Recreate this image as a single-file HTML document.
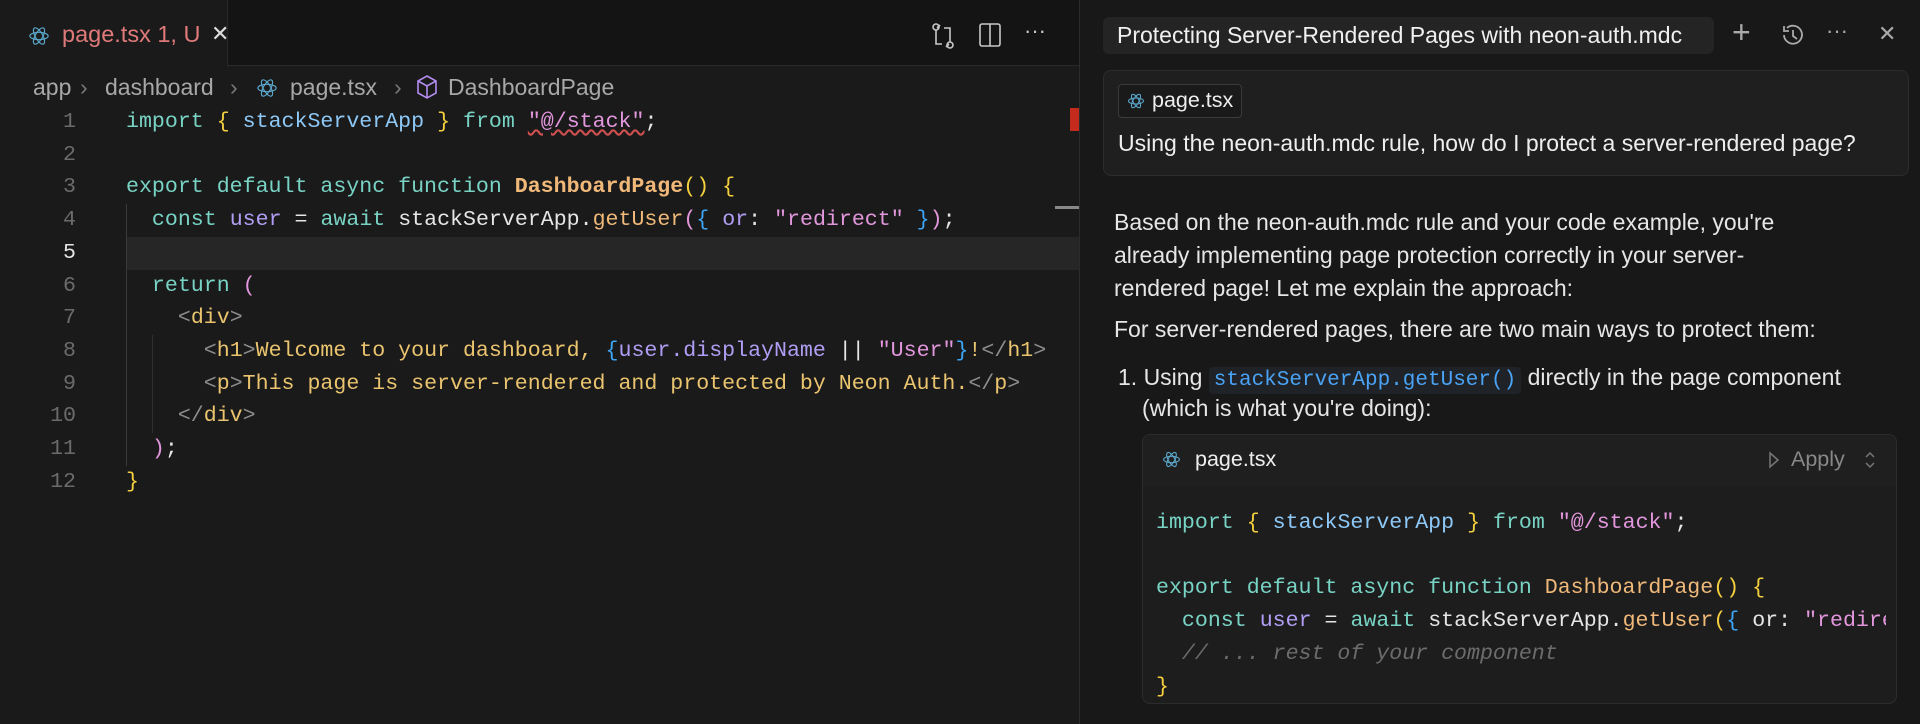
<!DOCTYPE html>
<html><head><meta charset="utf-8"><style>
*{margin:0;padding:0;box-sizing:border-box}
body{width:1920px;height:724px;background:#181818;overflow:hidden;position:relative;font-family:"Liberation Sans",sans-serif;color:#ddd}
.abs{position:absolute}
.mono{font-family:"Liberation Mono",monospace;font-size:21.6px;white-space:pre}
.k{color:#78d3c4}.v{color:#8ec8f6}.b{color:#f4d03f}.s{color:#e296dc}.f{color:#f0b97a}.u{color:#b19ef4}.bl{color:#3ea6f7}.g{color:#8d8d8d}.y{color:#eac46e}.w{color:#e6e6e6}.c{color:#6c6c6c;font-style:italic}
.ln{position:absolute;left:40px;width:36px;text-align:right;color:#6b6b6b}
.code{position:absolute;left:126px}
.guide{position:absolute;width:1px;background:#3a3a3a}
.bc{position:absolute;top:74px;font-size:23px;color:#a8a8a8;white-space:nowrap}
</style></head><body>
<div class="abs" style="left:0;top:0;width:1079px;height:724px;background:#1a1a1a"></div>
<div class="abs" style="left:0;top:0;width:1079px;height:66px;background:#141414;border-bottom:1px solid #2a2a2a"></div>
<div class="abs" style="left:0;top:0;width:228px;height:67px;background:#1a1a1a;border-right:1px solid #2a2a2a"></div>
<svg class="abs" style="left:28px;top:24px" width="22" height="24" viewBox="0 0 24 24" fill="none" stroke="#5aa5c8" stroke-width="1.3"><ellipse cx="12" cy="12" rx="10" ry="4"/><ellipse cx="12" cy="12" rx="10" ry="4" transform="rotate(60 12 12)"/><ellipse cx="12" cy="12" rx="10" ry="4" transform="rotate(120 12 12)"/></svg>
<div class="abs" style="left:62px;top:21px;font-size:23.5px;color:#e07a7a">page.tsx 1, U</div>
<div class="abs" style="left:211px;top:21px;font-size:22px;color:#ddd">✕</div>
<svg class="abs" style="left:930px;top:22px" width="26" height="28" viewBox="0 0 26 28" fill="none" stroke="#c8c8c8" stroke-width="1.6"><circle cx="6" cy="5" r="3"/><circle cx="20" cy="23" r="3"/><path d="M6 8v14h6M20 20V6h-6M10 3l-3 3M16 25l3-3"/></svg>
<svg class="abs" style="left:978px;top:22px" width="24" height="26" fill="none" stroke="#c8c8c8" stroke-width="1.6"><rect x="2" y="2" width="20" height="22" rx="2"/><path d="M12 2v22"/></svg>
<div class="abs" style="left:1024px;top:18px;font-size:22px;color:#c8c8c8">···</div>
<div class="bc" style="left:33px">app</div>
<div class="bc" style="left:80px;color:#777">›</div>
<div class="bc" style="left:105px">dashboard</div>
<div class="bc" style="left:230px;color:#777">›</div>
<svg class="abs" style="left:256px;top:76px" width="22" height="24" viewBox="0 0 24 24" fill="none" stroke="#5aa5c8" stroke-width="1.3"><ellipse cx="12" cy="12" rx="10" ry="4"/><ellipse cx="12" cy="12" rx="10" ry="4" transform="rotate(60 12 12)"/><ellipse cx="12" cy="12" rx="10" ry="4" transform="rotate(120 12 12)"/></svg>
<div class="bc" style="left:290px">page.tsx</div>
<div class="bc" style="left:394px;color:#777">›</div>
<svg class="abs" style="left:416px;top:74px" width="22" height="26" viewBox="0 0 22 26" fill="none" stroke="#b38cf0" stroke-width="1.6"><path d="M11 2l9 5v12l-9 5-9-5V7z M2 7l9 5 9-5 M11 12v12"/></svg>
<div class="bc" style="left:448px">DashboardPage</div>
<div class="abs" style="left:126px;top:237px;width:953px;height:33px;background:#262626"></div>
<div class="guide" style="left:126px;top:204px;height:262px"></div>
<div class="guide" style="left:152px;top:335px;height:98px;background:#2e2e2e"></div>
<div class="abs" style="left:1070px;top:108px;width:9px;height:23px;background:#c42b1c"></div>
<div class="abs" style="left:1055px;top:206px;width:24px;height:3px;background:#888"></div>
<div class="mono" style="position:absolute;left:0;top:106px;line-height:32.7px;width:1079px"><div class="ln" style="top:0">1</div><div class="ln" style="top:32.7px">2</div><div class="ln" style="top:65.4px">3</div><div class="ln" style="top:98.1px">4</div><div class="ln" style="top:130.8px;color:#e6e6e6">5</div><div class="ln" style="top:163.5px">6</div><div class="ln" style="top:196.2px">7</div><div class="ln" style="top:228.9px">8</div><div class="ln" style="top:261.6px">9</div><div class="ln" style="top:294.3px">10</div><div class="ln" style="top:327px">11</div><div class="ln" style="top:359.7px">12</div><div class="code" style="top:0"><span class="k">import</span> <span class="b">{</span> <span class="v">stackServerApp</span> <span class="b">}</span> <span class="k">from</span> <span class="s" style="text-decoration:underline wavy #d05050">"@/stack"</span><span class="w">;</span></div><div class="code" style="top:65.4px"><span class="k">export default async function</span> <span class="f" style="font-weight:bold">DashboardPage</span><span class="b">()</span> <span class="b">{</span></div><div class="code" style="top:98.1px">  <span class="k">const</span> <span class="u">user</span> <span class="w">=</span> <span class="k">await</span> <span class="w">stackServerApp.</span><span class="f">getUser</span><span class="s">(</span><span class="bl">{</span> <span class="u">or</span><span class="w">:</span> <span class="s">"redirect"</span> <span class="bl">}</span><span class="s">)</span><span class="w">;</span></div><div class="code" style="top:163.5px">  <span class="k">return</span> <span class="s">(</span></div><div class="code" style="top:196.2px">    <span class="g">&lt;</span><span class="y">div</span><span class="g">&gt;</span></div><div class="code" style="top:228.9px">      <span class="g">&lt;</span><span class="y">h1</span><span class="g">&gt;</span><span class="y">Welcome to your dashboard, </span><span class="bl">{</span><span class="u">user.displayName</span> <span class="w">||</span> <span class="s">"User"</span><span class="bl">}</span><span class="y">!</span><span class="g">&lt;/</span><span class="y">h1</span><span class="g">&gt;</span></div><div class="code" style="top:261.6px">      <span class="g">&lt;</span><span class="y">p</span><span class="g">&gt;</span><span class="y">This page is server-rendered and protected by Neon Auth.</span><span class="g">&lt;/</span><span class="y">p</span><span class="g">&gt;</span></div><div class="code" style="top:294.3px">    <span class="g">&lt;/</span><span class="y">div</span><span class="g">&gt;</span></div><div class="code" style="top:327px">  <span class="s">)</span><span class="w">;</span></div><div class="code" style="top:359.7px"><span class="b">}</span></div></div>
<div class="abs" style="left:1079px;top:0;width:1px;height:724px;background:#2b2b2b"></div>
<div class="abs" style="left:1103px;top:17px;width:611px;height:37px;background:#242424;border-radius:6px"></div>
<div class="abs" style="left:1117px;top:22px;font-size:23px;color:#f0f0f0;white-space:nowrap">Protecting Server-Rendered Pages with neon-auth.mdc</div>
<div class="abs" style="left:1732px;top:14px;font-size:32px;color:#aaa;font-weight:300">+</div>
<svg class="abs" style="left:1780px;top:22px" width="26" height="26" viewBox="0 0 26 26" fill="none" stroke="#aaa" stroke-width="1.8"><path d="M4 13a9 9 0 1 0 3-7M4 4v5h5M13 8v6l4 3"/></svg>
<div class="abs" style="left:1826px;top:18px;font-size:22px;color:#aaa">···</div>
<div class="abs" style="left:1878px;top:21px;font-size:22px;color:#aaa">✕</div>
<div class="abs" style="left:1103px;top:70px;width:806px;height:106px;background:#1f1f1f;border:1px solid #2c2c2c;border-radius:8px"></div>
<div class="abs" style="left:1118px;top:84px;width:124px;height:34px;border:1px solid #3a3a3a;border-radius:4px;background:#1a1a1a"></div>
<svg class="abs" style="left:1127px;top:91px" width="18" height="20" viewBox="0 0 24 24" fill="none" stroke="#5aa5c8" stroke-width="1.4"><ellipse cx="12" cy="12" rx="10" ry="4"/><ellipse cx="12" cy="12" rx="10" ry="4" transform="rotate(60 12 12)"/><ellipse cx="12" cy="12" rx="10" ry="4" transform="rotate(120 12 12)"/></svg>
<div class="abs" style="left:1152px;top:88px;font-size:21.5px;color:#eee">page.tsx</div>
<div class="abs" style="left:1118px;top:130px;font-size:23px;color:#eee;white-space:nowrap">Using the neon-auth.mdc rule, how do I protect a server-rendered page?</div>
<div class="abs" style="left:1114px;top:206px;width:790px;font-size:23px;line-height:33px;color:#e6e6e6;white-space:nowrap">Based on the neon-auth.mdc rule and your code example, you're<br>already implementing page protection correctly in your server-<br>rendered page! Let me explain the approach:</div>
<div class="abs" style="left:1114px;top:316px;font-size:23px;color:#e6e6e6;white-space:nowrap">For server-rendered pages, there are two main ways to protect them:</div>
<div class="abs" style="left:1118px;top:361px;font-size:23px;line-height:33px;color:#e6e6e6;white-space:pre">1. Using <span style="background:#1f2226;border-radius:4px;padding:2px 5px;font-family:'Liberation Mono',monospace;font-size:21px;color:#4aa3f5">stackServerApp.getUser()</span> directly in the page component</div>
<div class="abs" style="left:1142px;top:395px;font-size:23px;color:#e6e6e6;white-space:nowrap">(which is what you're doing):</div>
<div class="abs" style="left:1142px;top:434px;width:755px;height:270px;background:#1d1d1d;border:1px solid #2c2c2c;border-radius:8px;overflow:hidden">
<div style="height:51px;background:#1f1f1f"></div>
</div>
<svg class="abs" style="left:1162px;top:449px" width="19" height="21" viewBox="0 0 24 24" fill="none" stroke="#5aa5c8" stroke-width="1.4"><ellipse cx="12" cy="12" rx="10" ry="4"/><ellipse cx="12" cy="12" rx="10" ry="4" transform="rotate(60 12 12)"/><ellipse cx="12" cy="12" rx="10" ry="4" transform="rotate(120 12 12)"/></svg>
<div class="abs" style="left:1195px;top:447px;font-size:21.5px;color:#eee">page.tsx</div>
<svg class="abs" style="left:1768px;top:451px" width="12" height="18" fill="none" stroke="#777" stroke-width="1.5"><path d="M2 2l8 7-8 7z"/></svg>
<div class="abs" style="left:1791px;top:447px;font-size:21.5px;color:#888">Apply</div>
<svg class="abs" style="left:1864px;top:451px" width="12" height="18" fill="none" stroke="#777" stroke-width="1.5"><path d="M2 6l4-4 4 4M2 12l4 4 4-4"/></svg>
<div class="mono abs" style="left:1156px;top:507px;width:730px;overflow:hidden;line-height:32.7px"><div><span class="k">import</span> <span class="b">{</span> <span class="v">stackServerApp</span> <span class="b">}</span> <span class="k">from</span> <span class="s">"@/stack"</span><span class="w">;</span></div><div> </div><div><span class="k">export default async function</span> <span class="f">DashboardPage</span><span class="b">()</span> <span class="b">{</span></div><div>  <span class="k">const</span> <span class="u">user</span> <span class="w">=</span> <span class="k">await</span> <span class="w">stackServerApp.</span><span class="f">getUser</span><span class="b">(</span><span class="bl">{</span> <span class="w">or:</span> <span class="s">"redirect" });</span></div><div>  <span class="c">// ... rest of your component</span></div><div><span class="b">}</span></div></div>
</body></html>
